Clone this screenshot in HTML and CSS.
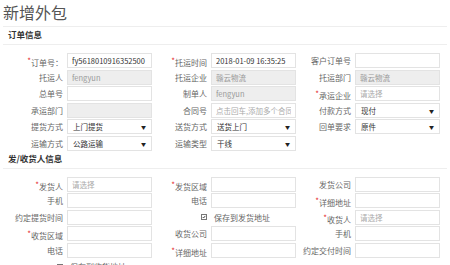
FILE: index.html
```html
<!DOCTYPE html>
<html lang="zh-CN">
<head>
    <meta charset="UTF-8">
    <title>新增外包</title>
    <link rel="stylesheet" href="styles.css">
</head>
<body>
    <h1 class="page-title">新增外包</h1>

    <div class="panel">
        <div class="section-head">订单信息</div>
        <div class="form-grid">
            <label class="req">订单号：</label>
            <input class="inp" type="text" value="fy5618010916352500">
            <label class="req">托运时间</label>
            <input class="inp" type="text" value="2018-01-09 16:35:25">
            <label>客户订单号</label>
            <input class="inp" type="text">

            <label>托运人</label>
            <input class="inp" type="text" value="fengyun" readonly>
            <label>托运企业</label>
            <input class="inp" type="text" value="赣云物流" readonly>
            <label>托运部门</label>
            <input class="inp" type="text" value="赣云物流" readonly>

            <label>总单号</label>
            <input class="inp" type="text">
            <label>制单人</label>
            <input class="inp" type="text" value="fengyun" readonly>
            <label class="req">承运企业</label>
            <input class="inp" type="text" placeholder="请选择">

            <label>承运部门</label>
            <input class="inp" type="text" readonly>
            <label>合同号</label>
            <input class="inp" type="text" placeholder="点击回车,添加多个合同号">
            <label>付款方式</label>
            <div class="select"><span>现付</span><span class="arrow">▼</span></div>

            <label>提货方式</label>
            <div class="select"><span>上门提货</span><span class="arrow">▼</span></div>
            <label>送货方式</label>
            <div class="select"><span>送货上门</span><span class="arrow">▼</span></div>
            <label>回单要求</label>
            <div class="select"><span>原件</span><span class="arrow">▼</span></div>

            <label>运输方式</label>
            <div class="select"><span>公路运输</span><span class="arrow">▼</span></div>
            <label>运输类型</label>
            <div class="select"><span>干线</span><span class="arrow">▼</span></div>
        </div>

        <div class="section-head">发/收货人信息</div>
        <div class="form-grid">
            <label class="req">发货人</label>
            <input class="inp" type="text" placeholder="请选择">
            <label class="req">发货区域</label>
            <input class="inp" type="text">
            <label>发货公司</label>
            <input class="inp" type="text">

            <label>手机</label>
            <input class="inp" type="text">
            <label>电话</label>
            <input class="inp" type="text">
            <label class="req">详细地址</label>
            <input class="inp" type="text">

            <label>约定提货时间</label>
            <input class="inp" type="text">
            <span class="check-cell"><span class="check"><svg viewBox="0 0 8 8"><path d="M1.5 4.2 3.2 6 6.6 1.8"/></svg></span></span>
            <span class="check-text">保存到发货地址</span>
            <label class="req">收货人</label>
            <input class="inp" type="text" placeholder="请选择">

            <label class="req">收货区域</label>
            <input class="inp" type="text">
            <label>收货公司</label>
            <input class="inp" type="text">
            <label>手机</label>
            <input class="inp" type="text">

            <label>电话</label>
            <input class="inp" type="text">
            <label class="req">详细地址</label>
            <input class="inp" type="text">
            <label>约定交付时间</label>
            <input class="inp" type="text">

            <span class="check-cell"><span class="check"><svg viewBox="0 0 8 8"><path d="M1.5 4.2 3.2 6 6.6 1.8"/></svg></span></span>
            <span class="check-text">保存到收货地址</span>
        </div>
    </div>
</body>
</html>
```

FILE: styles.css
```css
* {
    margin: 0;
    padding: 0;
    box-sizing: border-box;
}

body {
    font-family: "Noto Sans CJK SC", "Noto Sans", sans-serif;
    background: #fff;
    color: #555;
    padding: 0 3px;
}

.page-title {
    font-size: 16px;
    font-weight: normal;
    line-height: 18px;
    padding-top: 3px;
    color: #555;
}

.panel {
    margin-top: 5px;
    border-top: 1px solid #eee;
}

.section-head {
    height: 18px;
    line-height: 14px;
    padding-left: 5px;
    font-size: 8.5px;
    font-weight: bold;
    color: #333;
    border-bottom: 1px solid #eee;
}

.form-grid {
    display: grid;
    grid-template-columns: repeat(3, 59px 85px);
    grid-auto-rows: 15px;
    row-gap: 1.5px;
    padding: 8px 0 0 5px;
}

.form-grid label {
    font-size: 8px;
    line-height: 15px;
    text-align: right;
    padding-right: 4px;
    color: #666;
    white-space: nowrap;
}

.form-grid label.req::before {
    content: "*";
    color: #e42a2a;
    font-size: 8px;
    vertical-align: 2px;
}

.inp {
    height: 15px;
    width: 85px;
    border: 1px solid #e3e3e3;
    padding: 0 4px;
    font-family: inherit;
    font-size: 7.5px;
    color: #333;
    background: #fff;
    outline: none;
}

.inp::placeholder {
    color: #aaa;
}

.inp[readonly] {
    background: #eee;
    color: #999;
}

.select {
    display: flex;
    justify-content: space-between;
    align-items: center;
    height: 15px;
    border: 1px solid #e3e3e3;
    padding: 0 5px;
    font-size: 7.5px;
    color: #333;
}

.select .arrow {
    font-size: 5px;
    color: #222;
}

.check-cell {
    display: flex;
    justify-content: flex-end;
    align-items: center;
    padding-right: 4px;
}

.check {
    display: flex;
    width: 6px;
    height: 6px;
    border: 1px solid #777;
    background: #fff;
}

.check svg {
    width: 100%;
    height: 100%;
    fill: none;
    stroke: #222;
    stroke-width: 1.6;
}

.check-text {
    font-size: 8px;
    line-height: 15px;
    color: #666;
    padding-left: 3px;
    white-space: nowrap;
}
```
